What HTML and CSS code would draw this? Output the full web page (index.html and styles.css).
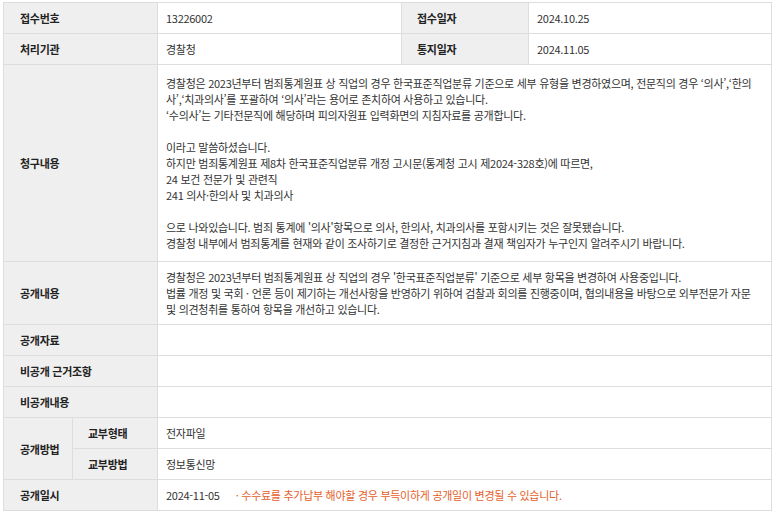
FILE: index.html
```html
<!DOCTYPE html>
<html lang="ko">
<head>
<meta charset="utf-8">
<title>정보공개 청구 상세</title>
<link rel="stylesheet" href="styles.css">
</head>
<body>
<div class="wrap">
<table class="info">
  <colgroup>
    <col class="c1"><col class="c2"><col class="c3"><col class="c4"><col class="c5">
  </colgroup>
  <tr>
    <th colspan="2">접수번호</th>
    <td>13226002</td>
    <th class="lab2">접수일자</th>
    <td>2024.10.25</td>
  </tr>
  <tr>
    <th colspan="2">처리기관</th>
    <td>경찰청</td>
    <th class="lab2">통지일자</th>
    <td>2024.11.05</td>
  </tr>
  <tr>
    <th colspan="2">청구내용</th>
    <td colspan="3" class="long"><p class="lines">경찰청은 2023년부터 범죄통계원표 상 직업의 경우 한국표준직업분류 기준으로 세부 유형을 변경하였으며, 전문직의 경우 ‘의사’,‘한의<br>사’,‘치과의사’를 포괄하여 ‘의사’라는 용어로 존치하여 사용하고 있습니다.<br>‘수의사’는 기타전문직에 해당하며 피의자원표 입력화면의 지침자료를 공개합니다.<br>&nbsp;<br>이라고 말씀하셨습니다.<br>하지만 범죄통계원표 제8차 한국표준직업분류 개정 고시문(통계청 고시 제2024-328호)에 따르면,<br>24 보건 전문가 및 관련직<br>241 의사·한의사 및 치과의사<br>&nbsp;<br>으로 나와있습니다. 범죄 통계에 '의사'항목으로 의사, 한의사, 치과의사를 포함시키는 것은 잘못됐습니다.<br>경찰청 내부에서 범죄통계를 현재와 같이 조사하기로 결정한 근거지침과 결재 책임자가 누구인지 알려주시기 바랍니다.</p></td>
  </tr>
  <tr>
    <th colspan="2">공개내용</th>
    <td colspan="3"><p class="lines">경찰청은 2023년부터 범죄통계원표 상 직업의 경우 '한국표준직업분류' 기준으로 세부 항목을 변경하여 사용중입니다.<br>법률 개정 및 국회 · 언론 등이 제기하는 개선사항을 반영하기 위하여 검찰과 회의를 진행중이며, 협의내용을 바탕으로 외부전문가 자문<br>및 의견청취를 통하여 항목을 개선하고 있습니다.</p></td>
  </tr>
  <tr>
    <th colspan="2">공개자료</th>
    <td colspan="3"></td>
  </tr>
  <tr>
    <th colspan="2">비공개 근거조항</th>
    <td colspan="3"></td>
  </tr>
  <tr>
    <th colspan="2">비공개내용</th>
    <td colspan="3"></td>
  </tr>
  <tr>
    <th rowspan="2">공개방법</th>
    <th class="sub">교부형태</th>
    <td colspan="3">전자파일</td>
  </tr>
  <tr>
    <th class="sub">교부방법</th>
    <td colspan="3">정보통신망</td>
  </tr>
  <tr>
    <th colspan="2">공개일시</th>
    <td colspan="3">2024-11-05<span class="note">· 수수료를 추가납부 해야할 경우 부득이하게 공개일이 변경될 수 있습니다.</span></td>
  </tr>
</table>
</div>
</body>
</html>
```

FILE: styles.css
```css
html, body {
  margin: 0;
  padding: 0;
  background: #ffffff;
}

.wrap {
  padding: 2px 0 0 3px;
}

.info {
  border-collapse: collapse;
  table-layout: fixed;
  width: 769px;
  font-family: "Noto Sans CJK KR", "Noto Sans", sans-serif;
  font-size: 11px;
  letter-spacing: -0.28px;
  line-height: 16px;
  color: #333333;
  border-top: 1px solid #d4d4d4;
  border-left: 1px solid #d4d4d4;
  border-right: 1px solid #d4d4d4;
}

.c1 { width: 69px; }
.c2 { width: 85px; }
.c3 { width: 244px; }
.c4 { width: 127px; }
.c5 { width: 243px; }

.info th,
.info td {
  border: 1px solid #dddddd;
  padding: 7px 8px;
  text-align: left;
  vertical-align: middle;
}

.info th {
  background: #efefef;
  font-weight: bold;
  color: #222222;
  padding-left: 16px;
}

.info th.lab2 {
  padding-left: 15px;
}

.info th.sub {
  padding-left: 15px;
}

.info td {
  background: #ffffff;
  padding-left: 8px;
}

.info td.long {
  padding-top: 10px;
  padding-bottom: 10px;
}

.lines {
  margin: 0;
  white-space: nowrap;
}

.note {
  margin-left: 16px;
  color: #e5602a;
}
```
